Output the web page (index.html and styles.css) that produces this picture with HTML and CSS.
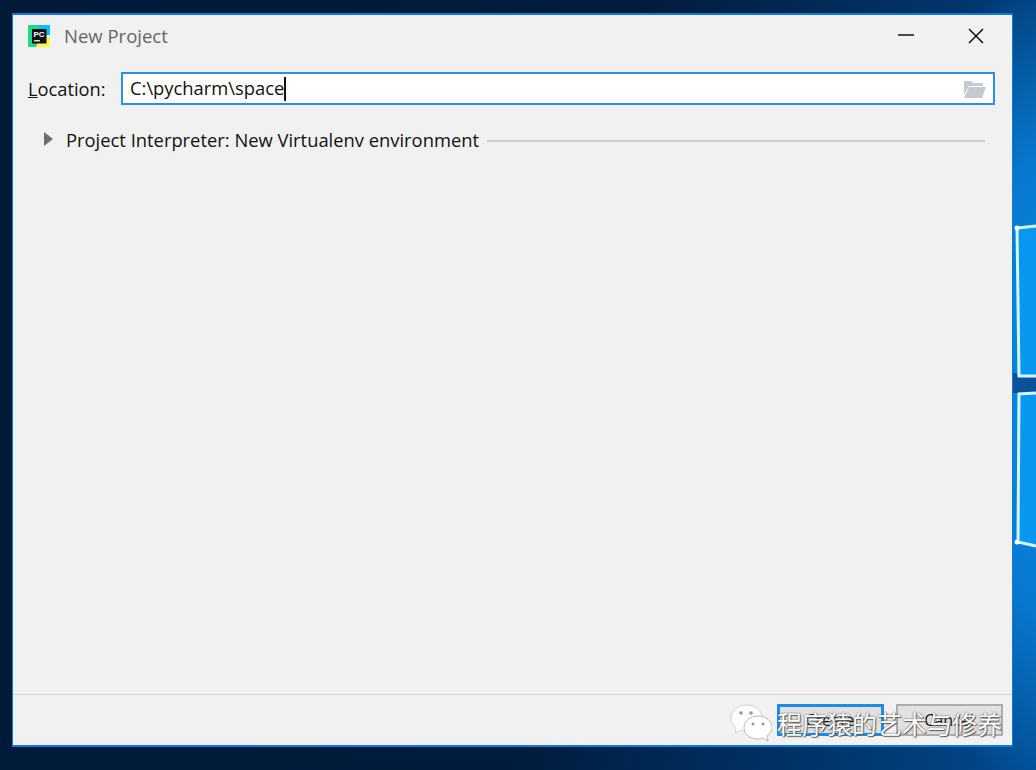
FILE: index.html
```html
<!DOCTYPE html>
<html lang="en">
<head>
<meta charset="utf-8">
<title>New Project</title>
<link rel="stylesheet" href="styles.css">
</head>
<body>
<div class="desktop">
  <svg class="logo" width="23" height="340" viewBox="0 0 23 340">
    <path d="M0 150H23V170H0Z" fill="#0b5098"/>
    <path d="M4 5L23 2V153H4Z" fill="#0a97f2"/>
    <path d="M4 171L23 170V322L4 319Z" fill="#0a97f2"/>
    <path d="M23 3L4 5L6 153H23M23 170L6 171L5 319L23 323" fill="none" stroke="#d4f6ff" stroke-width="3"/>
    <circle cx="4" cy="5" r="2.500" fill="#fff"/>
    <circle cx="4" cy="319" r="2.500" fill="#fff"/>
  </svg>
  <main class="window">
    <header class="titlebar">
      <svg class="app-icon" width="22" height="22" viewBox="0 0 22 22">
        <path d="M0 0H13V22H0Z" fill="#21d789"/>
        <path d="M10 0H22V10H10Z" fill="#07c3f2"/>
        <path d="M12 12H22V22H8Z" fill="#fcf84a"/>
        <rect x="4" y="4" width="14.500" height="14.500" fill="#111"/>
        <rect x="6" y="15" width="6" height="1.500" fill="#ddd"/>
        <text x="5.500" y="12" class="app-icon-text">PC</text>
      </svg>
      <h1 class="title">New Project</h1>
      <svg class="win-btn minimize" width="16" height="16" viewBox="0 0 16 16"><path d="M0 7H16" stroke="#111" stroke-width="1.500"/></svg>
      <svg class="win-btn close" width="16" height="16" viewBox="0 0 16 16"><path d="M1 1L15 15M15 1L1 15" stroke="#111" stroke-width="1.500"/></svg>
    </header>
    <div class="location-row">
      <label class="location-label"><span class="mnemonic">L</span>ocation:</label>
      <div class="location-field">
        <span class="location-value">C:\pycharm\space</span><span class="caret"></span>
        <svg class="folder" width="24" height="18" viewBox="0 0 24 18"><path d="M1 1H8L10 3H20V6H6L1 15Z" fill="#c4cacf"/><path d="M6 7H23L19 18H1Z" fill="#c4cacf"/></svg>
      </div>
    </div>
    <div class="interpreter-row">
      <svg class="chevron" width="9" height="14" viewBox="0 0 9 14"><path d="M0 0L9 7L0 14Z" fill="#6e6e6e"/></svg>
      <span class="interpreter-text">Project Interpreter: New Virtualenv environment</span>
      <span class="rule"></span>
    </div>
    <div class="spacer"></div>
    <footer class="footer">
      <button class="btn btn-primary">Create</button>
      <button class="btn btn-secondary">Cancel</button>
    </footer>
  </main>
  <div class="watermark">
    <svg class="wechat" width="42" height="38" viewBox="0 0 42 38">
      <path d="M17 1C8 1 1 7 1 14C1 18 3 21 6 24L5 29L11 26C13 27 15 27 17 27C26 27 32 21 32 14C32 7 26 1 17 1Z" fill="#fff" stroke="#bbb" stroke-width=".6"/>
      <path d="M28 12C20 12 14 17 14 24C14 30 20 35 28 35C30 35 31 35 33 34L38 37L37 32C40 30 42 27 42 24C42 17 36 12 28 12Z" fill="#fff" stroke="#aaa" stroke-width=".8"/>
      <circle cx="11" cy="9" r="1.800" fill="#999"/><circle cx="21" cy="9" r="1.800" fill="#999"/>
      <circle cx="23" cy="20" r="1.500" fill="#999"/><circle cx="33" cy="20" r="1.500" fill="#999"/>
    </svg>
    <span class="watermark-text">程序猿的艺术与修养</span>
  </div>
</div>
</body>
</html>
```
FILE: styles.css
```css
* { box-sizing: border-box; }
html, body { margin: 0; padding: 0; }
body { width: 1036px; height: 770px; overflow: hidden; }
.desktop {
  position: relative;
  width: 1036px;
  height: 770px;
  padding: 13px 0 0 12px;
  overflow: hidden;
  background:
    radial-gradient(ellipse 190px 420px at 1060px 385px, #0a8fe8 0%, #0878cf 55%, rgba(6,90,165,0) 100%),
    linear-gradient(100deg, #001a38 0%, #001c3c 55%, #01356c 82%, #024a8e 100%);
}
.logo { position: absolute; left: 1013px; top: 223px; filter: blur(.6px); }
.window {
  position: relative;
  width: 1001px;
  height: 734px;
  display: flex;
  flex-direction: column;
  background: #f1f1f1;
  border: 2px solid #0a7bdc;
  border-width: 2px 1.500px 2px 1.500px;
  font-family: "Open Sans", "Noto Sans", sans-serif;
  color: #111;
}
.titlebar { display: flex; align-items: center; height: 42px; padding: 0 28px 0 15px; }
.app-icon { flex: none; margin-right: 14px; }
.app-icon-text { font: 700 8px "Liberation Sans", sans-serif; fill: #fff; }
.title { flex: 1; margin: 0 0 2px; font-size: 18.500px; font-weight: 400; color: #666; }
.win-btn { flex: none; }
.minimize { margin-right: 54px; }
.location-row { display: flex; align-items: center; height: 33px; margin-top: 15px; padding: 0 17px 0 15px; }
.location-label { width: 93px; flex: none; font-size: 18.250px; }
.mnemonic { text-decoration: underline; }
.location-field {
  flex: 1;
  height: 33px;
  display: flex;
  align-items: center;
  padding: 0 0 3px 7px;
  background: #fff;
  border: 2px solid #2a8fe6;
}
.location-value { font-size: 18.360px; }
.caret { width: 2px; height: 24px; background: #111; margin-top: 3px; }
.folder { margin: 3px 6px 0 auto; flex: none; }
.interpreter-row { display: flex; align-items: center; height: 28px; margin-top: 20px; padding: 0 27px 0 30px; }
.chevron { flex: none; margin: 0 13px 0 1px; }
.interpreter-text { font-size: 18.360px; white-space: nowrap; }
.rule { flex: 1; height: 2px; margin: 4px 0 0 8px; background: #cdcdcd; }
.spacer { flex: 1; }
.footer {
  height: 51px;
  display: flex;
  align-items: center;
  justify-content: flex-end;
  gap: 12px;
  padding: 0 9.500px 0 0;
  border-top: 1px solid #d8d8d8;
}
.btn { width: 107px; height: 32px; font: 400 16px "Open Sans", sans-serif; color: #111; padding: 0; }
.btn-primary { background: #e1e1e1; border: 3px solid #1b8ce8; }
.btn-secondary { background: #e1e1e1; border: 2px solid #adadad; }
.watermark { position: absolute; left: 730px; top: 704px; display: flex; align-items: center; gap: 5px; }
.wechat { flex: none; }
.watermark-text {
  font: 400 25px "Noto Sans CJK SC", sans-serif;
  line-height: 38px;
  color: #fff;
  white-space: nowrap;
  text-shadow: 0 0 2px #444, 1px 1px 1px #666;
}
```
